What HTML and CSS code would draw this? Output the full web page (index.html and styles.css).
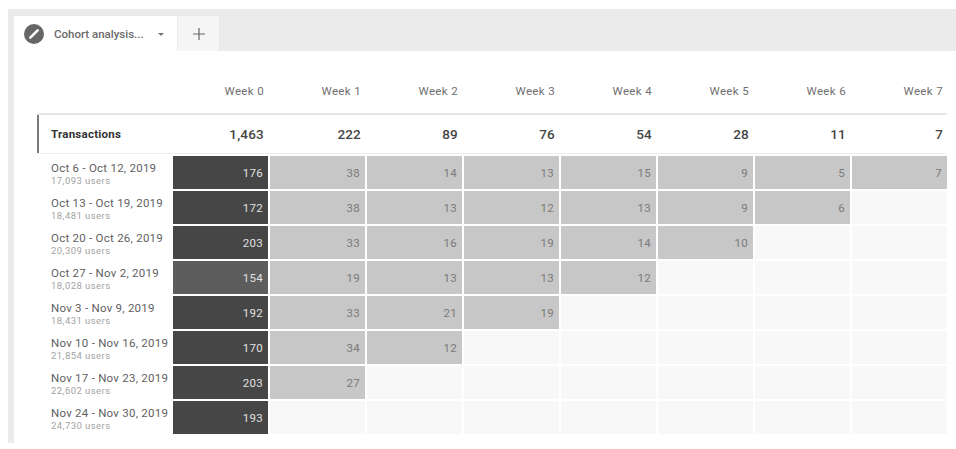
FILE: index.html
```html
<!DOCTYPE html>
<html>
<head>
<meta charset="utf-8">
<link rel="stylesheet" href="styles.css">
</head>
<body>
<div class="frame">
  <div class="tabbar">
    <div class="tab tab-active">
      <span class="edit-icon">
        <svg width="20" height="20" viewBox="0 0 20 20"><circle cx="10" cy="10" r="10" fill="#666"/><path d="M6.3 13.7 L12.6 7.4" stroke="#fff" stroke-width="2.6" stroke-linecap="round"/><path d="M13.3 6.7 L13.7 6.3" stroke="#fff" stroke-width="2.6" stroke-linecap="round"/></svg>
      </span>
      <span class="tab-title">Cohort analysis...</span>
      <span class="caret"></span>
    </div>
    <div class="tab tab-add">
      <svg width="14" height="14" viewBox="0 0 14 14"><path d="M7 1 V13 M1 7 H13" stroke="#666" stroke-width="1.2"/></svg>
    </div>
  </div>
  <div class="content">
    <div class="grid head-row">
      <div></div>
      <div class="wk">Week 0</div><div class="wk">Week 1</div><div class="wk">Week 2</div><div class="wk">Week 3</div>
      <div class="wk">Week 4</div><div class="wk">Week 5</div><div class="wk">Week 6</div><div class="wk">Week 7</div>
    </div>
    <div class="grid total-row">
      <div class="metric">Transactions</div>
      <div class="tot">1,463</div><div class="tot">222</div><div class="tot">89</div><div class="tot">76</div>
      <div class="tot">54</div><div class="tot">28</div><div class="tot">11</div><div class="tot">7</div>
    </div>
    <div class="cohorts">
      <div class="grid crow">
        <div class="label"><div class="date">Oct 6 - Oct 12, 2019</div><div class="users">17,093 users</div></div>
        <div class="c dark">176</div><div class="c light">38</div><div class="c light">14</div><div class="c light">13</div><div class="c light">15</div><div class="c light">9</div><div class="c light">5</div><div class="c light">7</div>
      </div>
      <div class="grid crow">
        <div class="label"><div class="date">Oct 13 - Oct 19, 2019</div><div class="users">18,481 users</div></div>
        <div class="c dark">172</div><div class="c light">38</div><div class="c light">13</div><div class="c light">12</div><div class="c light">13</div><div class="c light">9</div><div class="c light">6</div><div class="c empty"></div>
      </div>
      <div class="grid crow">
        <div class="label"><div class="date">Oct 20 - Oct 26, 2019</div><div class="users">20,309 users</div></div>
        <div class="c dark">203</div><div class="c light">33</div><div class="c light">16</div><div class="c light">19</div><div class="c light">14</div><div class="c light">10</div><div class="c empty"></div><div class="c empty"></div>
      </div>
      <div class="grid crow">
        <div class="label"><div class="date">Oct 27 - Nov 2, 2019</div><div class="users">18,028 users</div></div>
        <div class="c mid">154</div><div class="c light">19</div><div class="c light">13</div><div class="c light">13</div><div class="c light">12</div><div class="c empty"></div><div class="c empty"></div><div class="c empty"></div>
      </div>
      <div class="grid crow">
        <div class="label"><div class="date">Nov 3 - Nov 9, 2019</div><div class="users">18,431 users</div></div>
        <div class="c dark">192</div><div class="c light">33</div><div class="c light">21</div><div class="c light">19</div><div class="c empty"></div><div class="c empty"></div><div class="c empty"></div><div class="c empty"></div>
      </div>
      <div class="grid crow">
        <div class="label"><div class="date">Nov 10 - Nov 16, 2019</div><div class="users">21,854 users</div></div>
        <div class="c dark">170</div><div class="c light">34</div><div class="c light">12</div><div class="c empty"></div><div class="c empty"></div><div class="c empty"></div><div class="c empty"></div><div class="c empty"></div>
      </div>
      <div class="grid crow">
        <div class="label"><div class="date">Nov 17 - Nov 23, 2019</div><div class="users">22,602 users</div></div>
        <div class="c dark">203</div><div class="c light">27</div><div class="c empty"></div><div class="c empty"></div><div class="c empty"></div><div class="c empty"></div><div class="c empty"></div><div class="c empty"></div>
      </div>
      <div class="grid crow">
        <div class="label"><div class="date">Nov 24 - Nov 30, 2019</div><div class="users">24,730 users</div></div>
        <div class="c dark">193</div><div class="c empty"></div><div class="c empty"></div><div class="c empty"></div><div class="c empty"></div><div class="c empty"></div><div class="c empty"></div><div class="c empty"></div>
      </div>
    </div>
  </div>
</div>
</body>
</html>
```

FILE: styles.css
```css
* { box-sizing: border-box; }
html, body { margin: 0; padding: 0; background: #fff; }
body {
  font-family: Roboto, "Liberation Sans", Arial, sans-serif;
  width: 956px;
  height: 449px;
  overflow: hidden;
}
.frame {
  margin: 9px 0 0 8px;
  background: #ebebeb;
  padding-left: 6px;
  height: 434px;
  display: flex;
  flex-direction: column;
}
.tabbar {
  height: 42px;
  padding-top: 7px;
  display: flex;
  align-items: stretch;
  gap: 1px;
}
.tab {
  display: flex;
  align-items: center;
}
.tab-active {
  width: 163px;
  background: #fff;
  padding-left: 10px;
}
.edit-icon { width: 20px; height: 20px; display: flex; }
.tab-title {
  margin-left: 10px;
  font-size: 11.5px;
  font-weight: 500;
  color: #6a6a6a;
  letter-spacing: 0;
}
.caret {
  margin-left: 14px;
  width: 0;
  height: 0;
  border-left: 3.5px solid transparent;
  border-right: 3.5px solid transparent;
  border-top: 3.5px solid #777;
  margin-top: 1px;
}
.tab-add {
  width: 41px;
  background: #f5f5f5;
  justify-content: center;
}
.tab-add svg { display: block; margin-top: 1px; }
.content {
  flex: 1;
  background: #fff;
  padding-left: 23px;
}
.grid {
  display: grid;
  grid-template-columns: 134px repeat(8, 95px);
  column-gap: 2px;
}
.head-row {
  height: 62px;
  align-items: end;
  padding-bottom: 15px;
}
.wk {
  text-align: right;
  padding-right: 4px;
  font-size: 11.5px;
  line-height: 13px;
  color: #707070;
  letter-spacing: 0.35px;
}
.total-row {
  border-top: 2px solid #e6e6e6;
  border-bottom: 1px solid #eeeeee;
  height: 41px;
  align-items: center;
  box-shadow: inset 2px 0 0 #7a7a7a;
  width: 910px;
}
.metric {
  padding-left: 14px;
  font-size: 11.5px;
  font-weight: 700;
  color: #333;
  letter-spacing: 0.25px;
}
.tot {
  text-align: right;
  padding-right: 4px;
  font-size: 13.5px;
  font-weight: 500;
  color: #454545;
  letter-spacing: 0.2px;
}
.cohorts {
  margin-top: 2px;
  display: flex;
  flex-direction: column;
  gap: 2px;
}
.crow { height: 33px; }
.label {
  padding: 5px 0 0 14px;
}
.date {
  font-size: 11.5px;
  line-height: 14px;
  color: #5f5f5f;
  letter-spacing: 0.25px;
}
.users {
  font-size: 9.5px;
  line-height: 12px;
  color: #a3a3a3;
  letter-spacing: 0.45px;
}
.c {
  display: flex;
  align-items: center;
  justify-content: flex-end;
  padding-right: 5px;
  font-size: 11.5px;
  letter-spacing: 0.3px;
}
.dark { background: #464646; color: #e0e0e0; }
.mid { background: #5d5d5d; color: #e0e0e0; }
.light { background: #c7c7c7; color: #7a7a7a; }
.empty { background: #f8f8f8; }
```
